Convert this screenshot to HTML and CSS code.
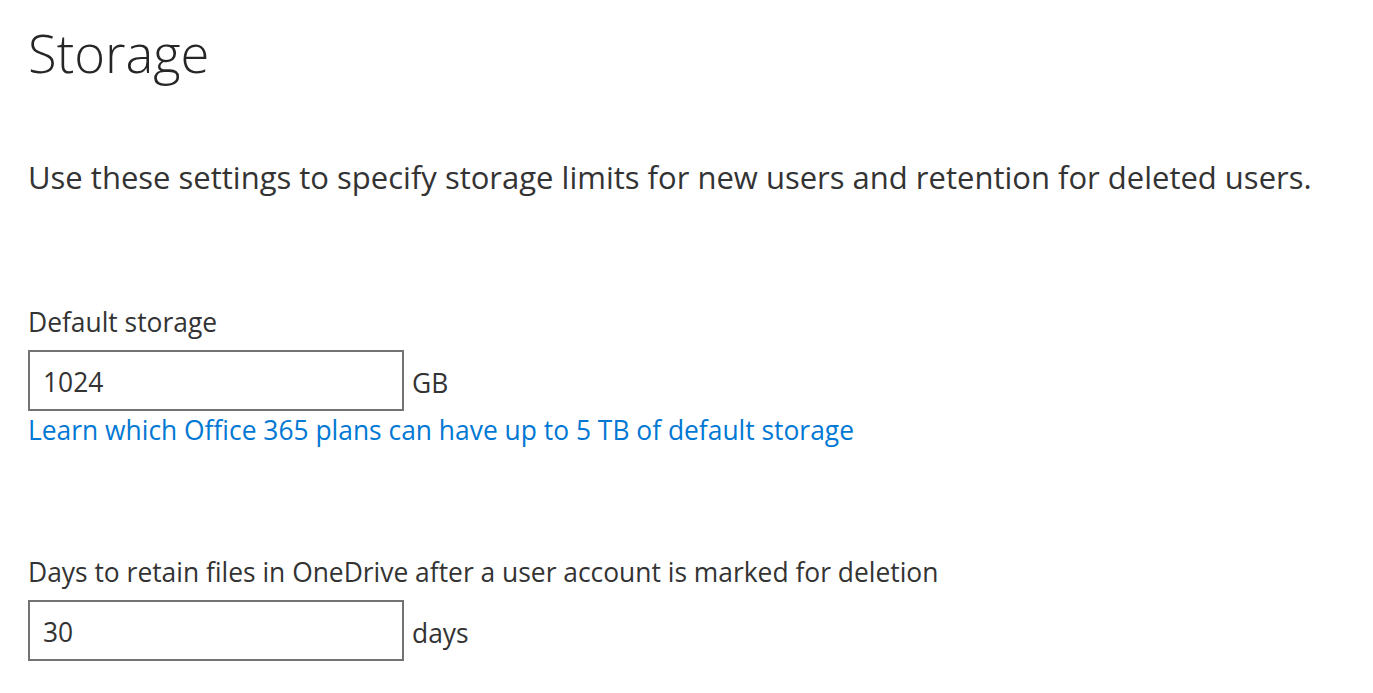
FILE: index.html
```html
<!DOCTYPE html>
<html lang="en">
<head>
<meta charset="utf-8">
<title>Storage</title>
<link rel="stylesheet" href="styles.css">
</head>
<body>
<main class="page">
  <h1 class="title">Storage</h1>
  <p class="intro">Use these settings to specify storage limits for new users and retention for deleted users.</p>
  <section class="field field-storage">
    <label class="label" for="storage">Default storage</label>
    <div class="input-row">
      <input class="text-input" id="storage" type="text" value="1024">
      <span class="unit">GB</span>
    </div>
    <a class="link" href="#">Learn which Office 365 plans can have up to 5 TB of default storage</a>
  </section>
  <section class="field field-days">
    <label class="label" for="days">Days to retain files in OneDrive after a user account is marked for deletion</label>
    <div class="input-row">
      <input class="text-input" id="days" type="text" value="30">
      <span class="unit">days</span>
    </div>
  </section>
</main>
</body>
</html>
```

FILE: styles.css
```css
html, body {
  margin: 0;
  padding: 0;
  background: #ffffff;
}

body {
  font-family: "Open Sans", "Noto Sans", "Liberation Sans", sans-serif;
  color: #333333;
}

.page {
  padding: 21px 0 0 28px;
  display: flex;
  flex-direction: column;
  align-items: flex-start;
}

.title {
  margin: 0;
  font-size: 52.5px;
  font-weight: 300;
  line-height: 64px;
  color: #262626;
}

.intro {
  margin: 72px 0 0 0;
  font-size: 31px;
  font-weight: 400;
  line-height: 40px;
  color: #333333;
}

.field {
  display: flex;
  flex-direction: column;
  align-items: flex-start;
}

.field-storage {
  margin-top: 107px;
}

.field-days {
  margin-top: 106px;
}

.label {
  font-size: 26.4px;
  line-height: 36px;
  margin-bottom: 10px;
}

.input-row {
  display: flex;
  align-items: center;
  gap: 8px;
}

.text-input {
  box-sizing: border-box;
  width: 376px;
  height: 61px;
  margin: 0;
  padding: 3px 13px 0 13px;
  border: 2px solid #737373;
  border-radius: 0;
  font-family: inherit;
  font-size: 26.4px;
  color: #333333;
  background: #ffffff;
  outline: none;
}

.unit {
  font-size: 26.4px;
  padding-top: 4px;
  color: #333333;
}

.link {
  font-size: 26.4px;
  line-height: 36px;
  color: #0078d4;
  text-decoration: none;
  margin-top: 1px;
}
```
